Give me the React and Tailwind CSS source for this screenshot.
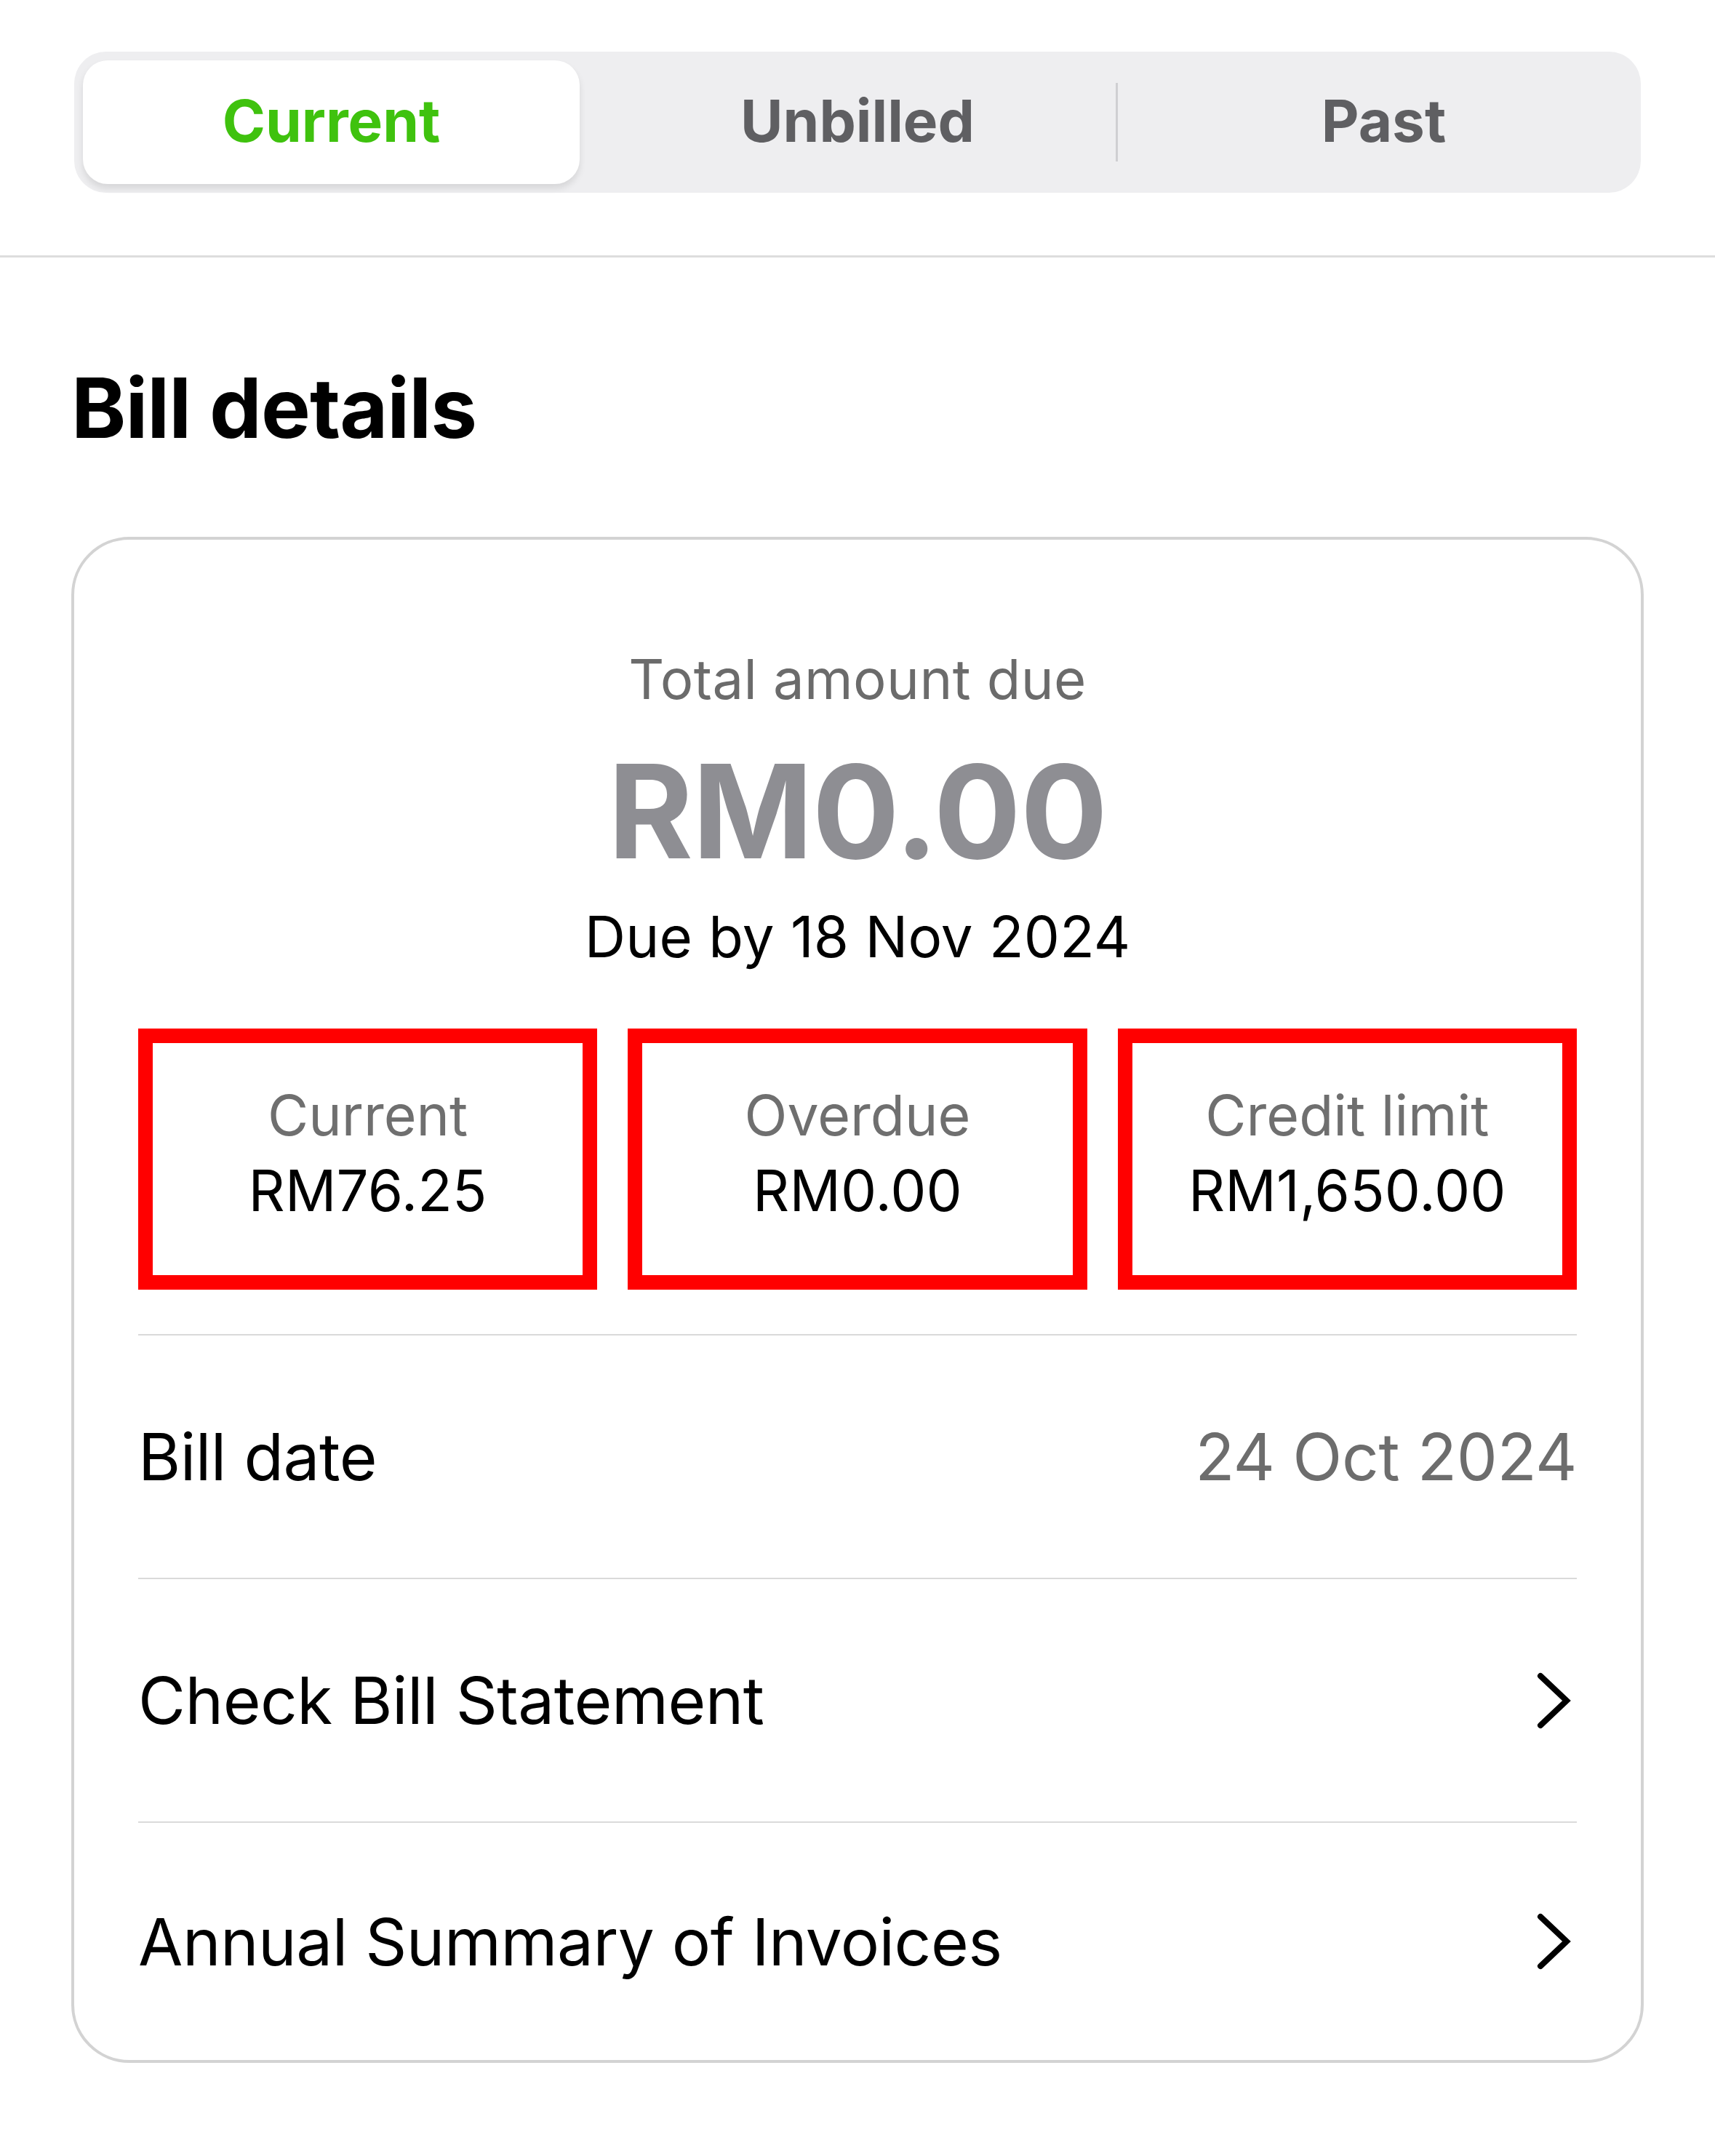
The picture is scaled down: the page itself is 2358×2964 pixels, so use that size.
const tabs = [
  { label: 'Current', active: true },
  { label: 'Unbilled' },
  { label: 'Past' },
];

const summary = [
  { label: 'Current', value: 'RM76.25' },
  { label: 'Overdue', value: 'RM0.00' },
  { label: 'Credit limit', value: 'RM1,650.00' },
];

function Chevron() {
  return (
    <svg width="52" height="84" viewBox="0 0 52 84" fill="none" className="mr-[6px] shrink-0">
      <polyline
        points="8,8 44,42 8,76"
        stroke="#000"
        strokeWidth="8"
        strokeLinecap="round"
        strokeLinejoin="miter"
      />
    </svg>
  );
}

function Row({ label, value, link, last }) {
  return (
    <div
      className={`flex items-center justify-between ${
        last ? 'h-[326px]' : 'h-[335px] border-b-2 border-[#dadada]'
      }`}
    >
      <span className="text-[89px] leading-none tracking-[-0.5px] text-black">{label}</span>
      {value && (
        <span className="text-[89px] leading-none tracking-[-0.4px] text-[#6d6d6d]">{value}</span>
      )}
      {link && <Chevron />}
    </div>
  );
}

export default function App() {
  return (
    <div className="min-h-[2964px] w-[2358px] bg-white font-[Inter,sans-serif]">
      <div className="px-[102px] pt-[71px] pb-[86px]">
        <div className="flex h-[194px] items-center rounded-[44px] bg-[#eeeef0] p-[12px]">
          {tabs.map((tab, i) => (
            <div key={tab.label} className="flex h-full flex-1 items-center">
              {i === 2 && <div className="h-[108px] w-[3px] bg-[#cfcfd2]" />}
              <div
                className={`flex h-full flex-1 items-center justify-center pb-[4px] text-[80px] font-bold leading-none ${
                  tab.active
                    ? 'mr-[27px] rounded-[34px] bg-white text-[#3fc20e] shadow-[0_6px_10px_rgba(0,0,0,0.10)]'
                    : 'text-[#5f5f62]'
                } ${i === 2 ? 'pl-[24px]' : ''}`}
              >
                {tab.label}
              </div>
            </div>
          ))}
        </div>
      </div>

      <div className="h-[3px] bg-[#dddddd]" />

      <div className="px-[98px]">
        <h2 className="mt-[150px] text-[114px] font-bold leading-none tracking-[-1px] text-black">
          Bill details
        </h2>

        <div className="mt-[120px] rounded-[80px] border-4 border-[#d3d3d3] px-[88px] pt-[153px]">
          <div className="flex flex-col items-center">
            <p className="text-[76px] leading-none tracking-[0.4px] text-[#6b6b6b]">Total amount due</p>
            <p className="mt-[56px] text-[178px] font-bold leading-none tracking-[-1px] text-[#8e8e93]">
              RM0.00
            </p>
            <p className="mt-[44px] text-[78px] leading-none tracking-[0.2px] text-black">
              Due by 18 Nov 2024
            </p>
          </div>

          <div className="mt-[87px] grid grid-cols-3 gap-[42px]">
            {summary.map((item) => (
              <div
                key={item.label}
                className="flex h-[359px] flex-col items-center justify-center gap-[26px] border-[20px] border-[#ff0000] pb-[16px]"
              >
                <span className="text-[77px] leading-none text-[#6f6f6f]">{item.label}</span>
                <span className="text-[78px] leading-none tracking-[0.2px] text-black">{item.value}</span>
              </div>
            ))}
          </div>

          <div className="mt-[61px] h-[2px] bg-[#dadada]" />
          <Row label="Bill date" value="24 Oct 2024" />
          <Row label="Check Bill Statement" link />
          <Row label="Annual Summary of Invoices" link last />
        </div>
      </div>
    </div>
  );
}
